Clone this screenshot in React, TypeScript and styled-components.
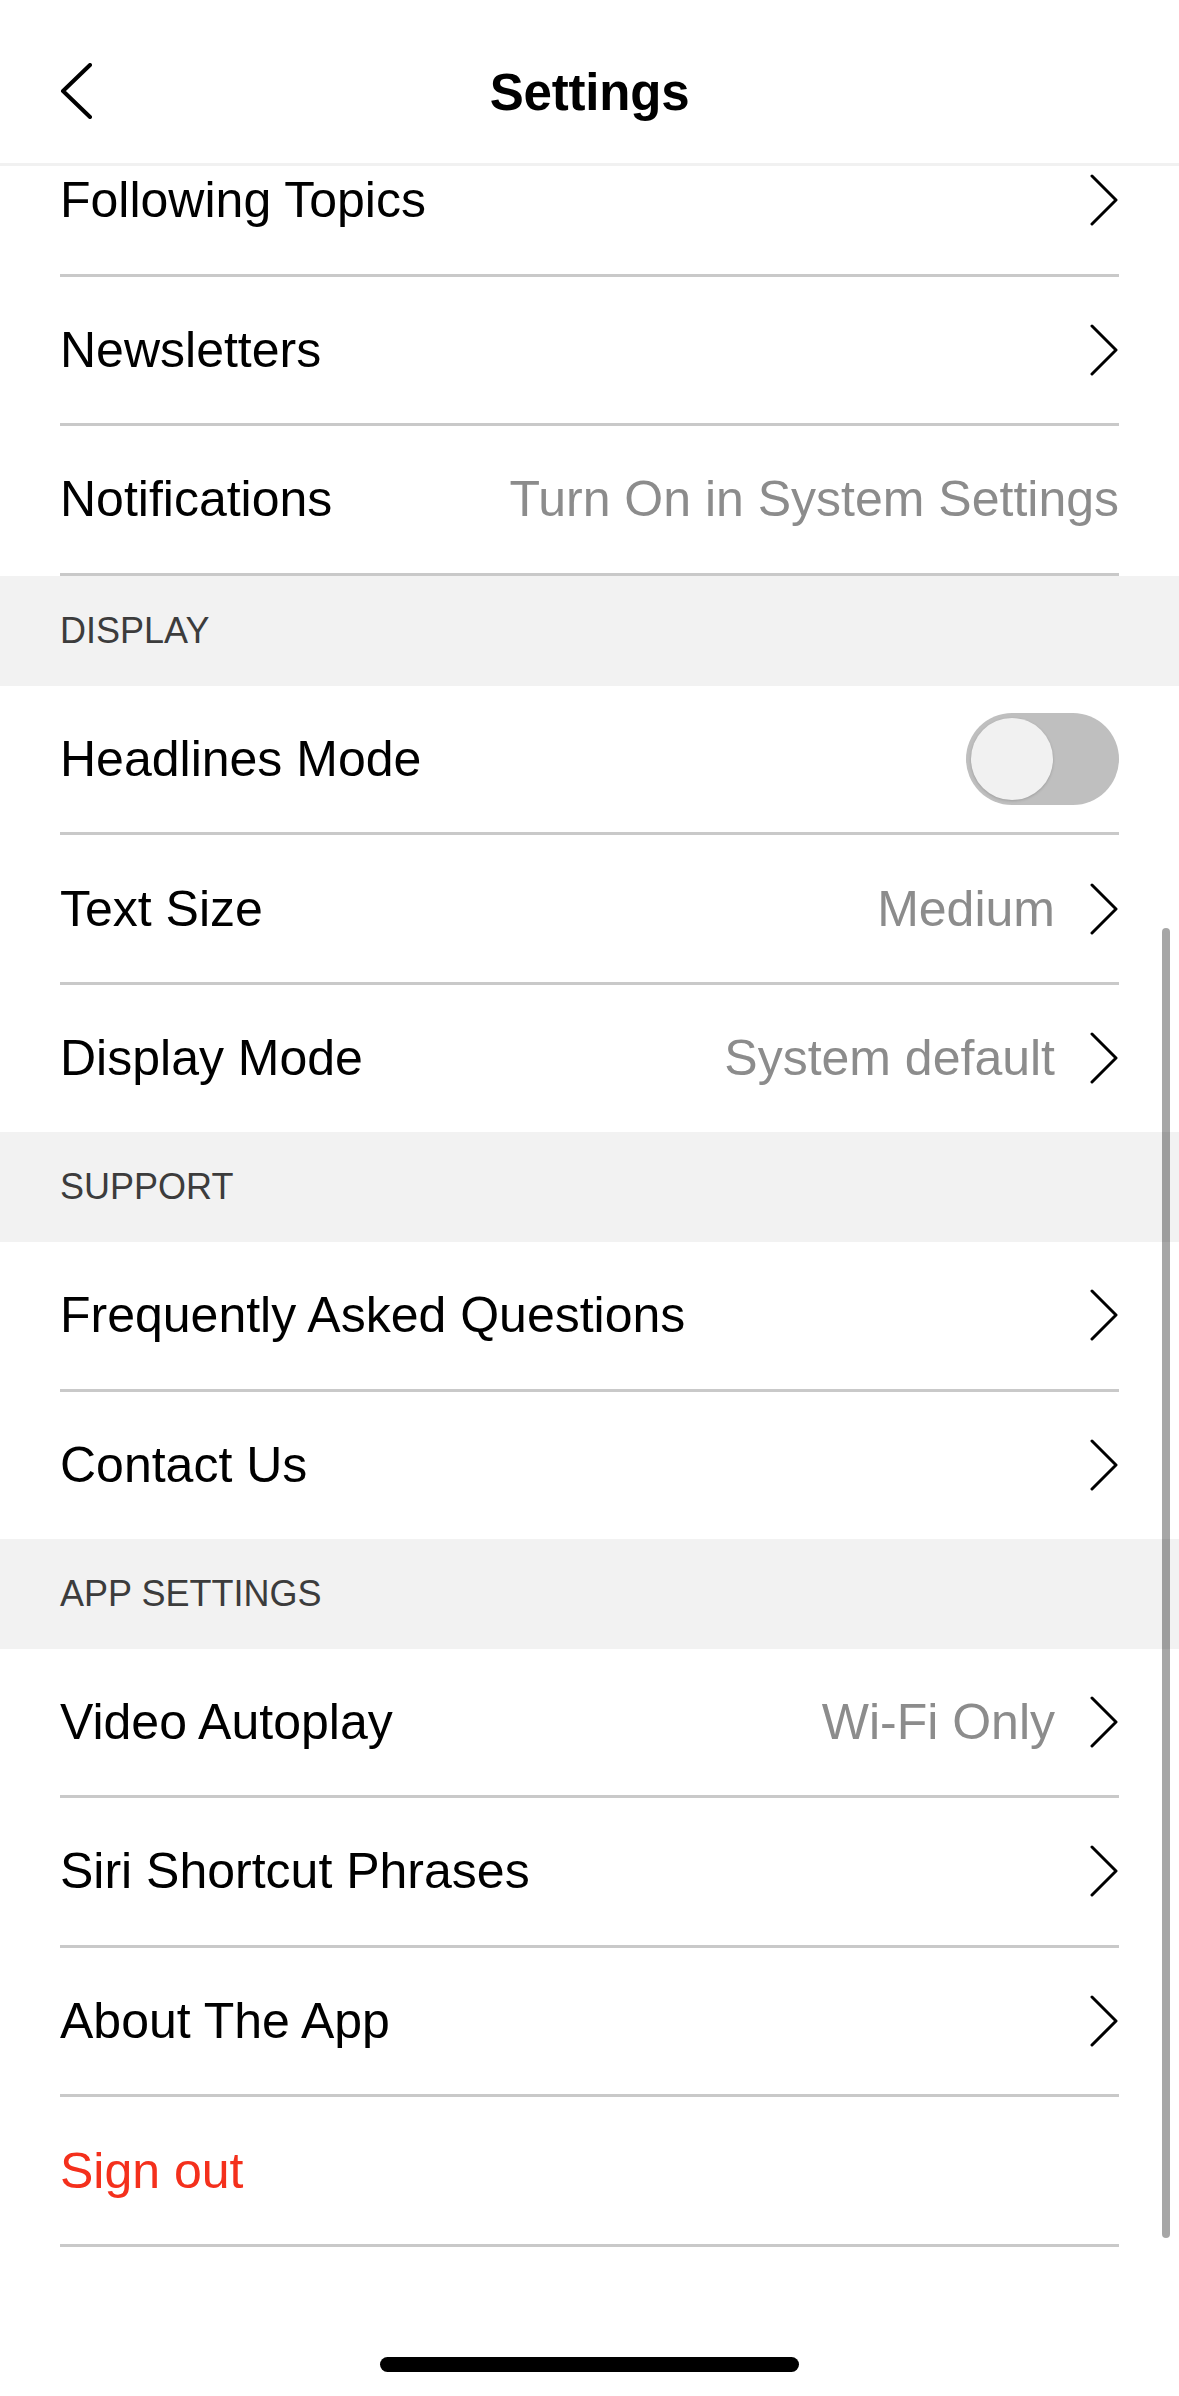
import React, { useState } from "react";
import styled, { createGlobalStyle } from "styled-components";

const GlobalStyle = createGlobalStyle`
    * {
        box-sizing: border-box;
    }
    body {
        margin: 0;
        background: #ffffff;
        font-family: "Liberation Sans", Arial, Helvetica, sans-serif;
    }
`;

const Screen = styled.div`
    position: relative;
    width: 1179px;
    height: 2396px;
    overflow: hidden;
    background: #ffffff;
    display: flex;
    flex-direction: column;
`;

const Header = styled.header`
    flex-shrink: 0;
    height: 166px;
    padding: 22px 60px 0;
    border-bottom: 3px solid #f1f1f1;
    display: grid;
    grid-template-columns: 1fr auto 1fr;
    align-items: center;
    background: #ffffff;
    z-index: 1;
`;

const BackButton = styled.button`
    justify-self: start;
    width: 34px;
    height: 56px;
    padding: 0;
    border: 0;
    background: none;
    display: flex;
    align-items: center;
    margin-top: -4px;
`;

const Title = styled.h1`
    margin: 0;
    font-size: 51px;
    font-weight: 700;
    color: #000000;
    letter-spacing: -0.2px;
`;

const Scroller = styled.main`
    flex: 1;
    overflow: hidden;
`;

const List = styled.div`
    margin-top: -39px;
    display: flex;
    flex-direction: column;
`;

const Row = styled.div<{ $divider?: boolean }>`
    height: ${(p) => (p.$divider ? "149.6px" : "147px")};
    margin: 0 60px;
    display: flex;
    align-items: center;
    border-bottom: ${(p) => (p.$divider ? "3px solid #c9c9c9" : "none")};
`;

const Label = styled.span<{ $danger?: boolean }>`
    flex: 1;
    font-size: 50px;
    color: ${(p) => (p.$danger ? "#f4301c" : "#000000")};
`;

const Value = styled.span`
    font-size: 50px;
    color: #8c8c8c;
`;

const ChevronWrap = styled.span<{ $spaced?: boolean }>`
    display: flex;
    margin-left: ${(p) => (p.$spaced ? "34px" : "0")};
`;

const SectionHeader = styled.div`
    height: 110px;
    padding: 0 60px;
    display: flex;
    align-items: center;
    background: #f2f2f2;
    font-size: 36px;
    color: #3c3c3c;
`;

const SwitchTrack = styled.button<{ $on: boolean }>`
    width: 153px;
    height: 92px;
    padding: 5px;
    border: 0;
    border-radius: 46px;
    background: ${(p) => (p.$on ? "#34c759" : "#bfbfbf")};
    display: flex;
    justify-content: ${(p) => (p.$on ? "flex-end" : "flex-start")};
    cursor: pointer;
`;

const SwitchKnob = styled.span`
    width: 82px;
    height: 82px;
    border-radius: 50%;
    background: #f1f1f1;
    box-shadow: 0 1px 3px rgba(0, 0, 0, 0.18);
`;

const ScrollIndicator = styled.div`
    position: absolute;
    left: 1162px;
    top: 928px;
    width: 8px;
    height: 1310px;
    border-radius: 4px;
    background: rgba(0, 0, 0, 0.35);
`;

const HomeIndicator = styled.div`
    position: absolute;
    left: 380px;
    bottom: 24px;
    width: 419px;
    height: 15px;
    border-radius: 8px;
    background: #000000;
`;

const Chevron = () => (
    <svg width="30" height="52" viewBox="0 0 30 52" fill="none">
        <polyline
            points="3,2 27,26 3,50"
            stroke="#000"
            strokeWidth="3"
            strokeLinecap="round"
            strokeLinejoin="round"
        />
    </svg>
);

const BackIcon = () => (
    <svg width="34" height="56" viewBox="0 0 34 56" fill="none">
        <polyline
            points="30,2 3,28 30,54"
            stroke="#000"
            strokeWidth="4"
            strokeLinecap="round"
            strokeLinejoin="round"
        />
    </svg>
);

interface IItem {
    label: string;
    value?: string;
    chevron?: boolean;
    divider?: boolean;
    danger?: boolean;
    toggle?: boolean;
}

interface IGroup {
    title?: string;
    items: IItem[];
}

const groups: IGroup[] = [
    {
        items: [
            { label: "Following Topics", chevron: true, divider: true },
            { label: "Newsletters", chevron: true, divider: true },
            {
                label: "Notifications",
                value: "Turn On in System Settings",
                divider: true,
            },
        ],
    },
    {
        title: "DISPLAY",
        items: [
            { label: "Headlines Mode", toggle: true, divider: true },
            { label: "Text Size", value: "Medium", chevron: true, divider: true },
            { label: "Display Mode", value: "System default", chevron: true },
        ],
    },
    {
        title: "SUPPORT",
        items: [
            { label: "Frequently Asked Questions", chevron: true, divider: true },
            { label: "Contact Us", chevron: true },
        ],
    },
    {
        title: "APP SETTINGS",
        items: [
            { label: "Video Autoplay", value: "Wi-Fi Only", chevron: true, divider: true },
            { label: "Siri Shortcut Phrases", chevron: true, divider: true },
            { label: "About The App", chevron: true, divider: true },
            { label: "Sign out", danger: true, divider: true },
        ],
    },
];

const App: React.FC = () => {
    const [headlines, setHeadlines] = useState(false);

    return (
        <Screen>
            <GlobalStyle />
            <Header>
                <BackButton aria-label="Back">
                    <BackIcon />
                </BackButton>
                <Title>Settings</Title>
                <span />
            </Header>
            <Scroller>
                <List>
                    {groups.map((group, gi) => (
                        <React.Fragment key={gi}>
                            {group.title && (
                                <SectionHeader>{group.title}</SectionHeader>
                            )}
                            {group.items.map((item) => (
                                <Row key={item.label} $divider={item.divider}>
                                    <Label $danger={item.danger}>
                                        {item.label}
                                    </Label>
                                    {item.value && <Value>{item.value}</Value>}
                                    {item.toggle && (
                                        <SwitchTrack
                                            $on={headlines}
                                            onClick={() =>
                                                setHeadlines(!headlines)
                                            }
                                        >
                                            <SwitchKnob />
                                        </SwitchTrack>
                                    )}
                                    {item.chevron && (
                                        <ChevronWrap $spaced={!!item.value}>
                                            <Chevron />
                                        </ChevronWrap>
                                    )}
                                </Row>
                            ))}
                        </React.Fragment>
                    ))}
                </List>
            </Scroller>
            <ScrollIndicator />
            <HomeIndicator />
        </Screen>
    );
};

export default App;
